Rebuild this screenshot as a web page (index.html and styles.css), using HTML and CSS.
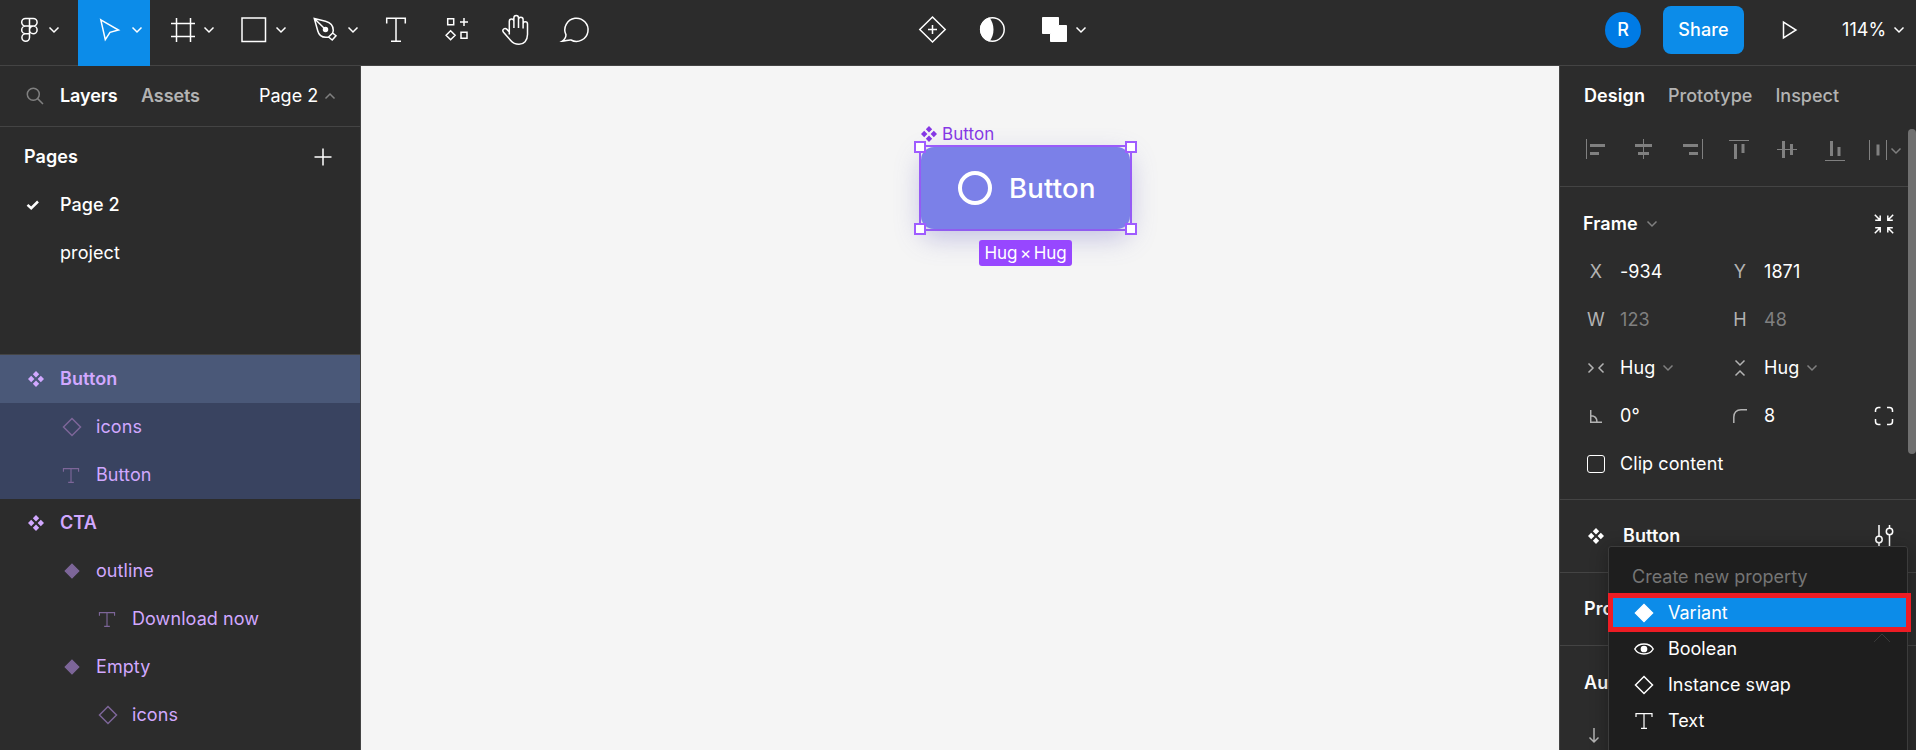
FILE: index.html
```html
<!DOCTYPE html>
<html lang="en">
<head>
<meta charset="utf-8">
<title>Design editor</title>
<link rel="stylesheet" href="styles.css">
</head>
<body>
<svg class="defs" width="0" height="0">
  <symbol id="chev" viewBox="0 0 12 8"><path d="M1.500 1.500 6 6l4.500-4.500"/></symbol>
  <symbol id="chev-up" viewBox="0 0 12 8"><path d="M1.500 6.500 6 2l4.500 4.500"/></symbol>
  <symbol id="component" viewBox="0 0 16 16"><path d="M8 0l3.200 3.200L8 6.400 4.800 3.200zM3.200 4.800 6.400 8l-3.200 3.200L0 8zM12.800 4.800 16 8l-3.200 3.200L9.600 8zM8 9.600l3.200 3.200L8 16l-3.200-3.200z"/></symbol>
  <symbol id="diamond" viewBox="0 0 20 20"><path d="M10 1.500 18.500 10 10 18.500 1.500 10z"/></symbol>
  <symbol id="tee" viewBox="0 0 18 18"><path d="M1 5V1.700h16V5M9 1.700v14.600M6 16.300h6"/></symbol>
</svg>
<div class="app">
  <header class="toolbar">
    <div class="tools">
      <svg class="tool menu" viewBox="0 0 78 65"><path d="M29.500 18.500h-4a3.800 3.800 0 0 0 0 7.600h4zM29.500 26.100h-4a3.800 3.800 0 0 0 0 7.600h4zM29.500 33.700h-4a3.800 3.800 0 1 0 4 3.800zM29.500 18.500h3.800a3.800 3.800 0 0 1 0 7.600h-3.800M33.400 26.100a3.800 3.800 0 1 1-3.900 3.800 3.800 3.800 0 0 1 3.900-3.800z"/><use href="#chev" x="48" y="26" width="12" height="8"/></svg>
      <svg class="tool active" viewBox="78 0 72 66"><path d="M100.800 19.800 118.500 30l-8.500 2.300-4.700 7.300z"/><use href="#chev" x="131" y="26" width="12" height="8"/></svg>
      <svg class="tool" viewBox="150 0 72 65"><path d="M176.500 18v24M190.500 18v24M171 23.500h24M171 36.500h24"/><use href="#chev" x="203" y="26" width="12" height="8"/></svg>
      <svg class="tool" viewBox="222 0 72 65"><path d="M242 18h23.500v23.500H242z"/><use href="#chev" x="275" y="26" width="12" height="8"/></svg>
      <svg class="tool" viewBox="294 0 72 65"><path d="M314.300 18.500l11.200 2.800c5 1.300 7.800 4.700 7.800 9.200l-.6 2.500 3.300 2.800-3.800 4.200-3.700-3c-5.500 1-9.300-.7-10.700-6zM314.300 18.500l10.200 10M332.700 33l-4.200 4"/><circle class="solid" cx="325.500" cy="29.500" r="2"/><use href="#chev" x="347" y="26" width="12" height="8"/></svg>
      <svg class="tool narrow" viewBox="366 0 60 65"><path d="M386.700 23.500v-5.300h18.600v5.300M396 18.200v23M391 41.200h10"/></svg>
      <svg class="tool narrow" viewBox="426 0 60 65"><path d="M447.700 18.700h6v6h-6zM461 32.300h6v6h-6zM464 18v8M460 22h8M450.600 30.700l4.500 4.500-4.500 4.500-4.500-4.500z"/></svg>
      <svg class="tool narrow" viewBox="486 0 60 65"><path d="M509.300 34.500V21.200a2.300 2.300 0 0 1 4.600 0V28M513.900 28V17.800a2.300 2.300 0 0 1 4.600 0V28M518.500 28v-8.500a2.300 2.300 0 0 1 4.600 0v9M523.100 28.500V24a2.200 2.200 0 0 1 4.400 0v10.500c0 6-3.700 9.800-8.500 9.800-4 0-6.200-1.200-8.300-3.800l-7.200-8.200c-2-2.800 1.300-5 3.500-2.900l2.300 2.500"/></svg>
      <svg class="tool narrow" viewBox="546 0 60 65"><path d="M562 41.300c2.400-1.500 3.900-3.400 4-6.500A11.600 11.600 0 1 1 571 40c-2.700-.5-5.500 1.300-9 1.300z"/></svg>
    </div>
    <svg class="object-tools" viewBox="902 0 200 65"><path d="M932.500 17l12.700 12.500-12.700 12.500L919.800 29.500zM932.500 25v9M928 29.500h9"/><circle cx="992.500" cy="29.500" r="11.700"/><path class="solid" d="M989 18.200a11.800 11.800 0 0 0 0 22.600c5-6.500 5-16 0-22.600z"/><path class="solid thin" d="M1042.500 17.500h16v8h8v16h-16v-8h-8z"/><use href="#chev" x="1075" y="26" width="12" height="8"/></svg>
    <div class="session">
      <span class="avatar">R</span>
      <button class="share">Share</button>
      <svg class="play" width="18" height="22" viewBox="0 0 18 22"><path d="M2.500 3v16L15 11z"/></svg>
      <span class="zoom-level">114%</span>
      <svg class="zoom-chev" width="12" height="8"><use href="#chev"/></svg>
    </div>
  </header>

  <aside class="left">
    <nav class="left-tabs">
      <svg class="search" width="18" height="18" viewBox="0 0 18 18"><circle cx="7.300" cy="7.300" r="6"/><path d="M11.600 11.600 17 17"/></svg>
      <b>Layers</b><b class="muted assets">Assets</b>
      <span class="current-page">Page 2</span>
      <svg class="dim" width="12" height="8"><use href="#chev-up"/></svg>
    </nav>
    <section class="pages">
      <div class="pages-head"><b>Pages</b><svg width="18" height="18" viewBox="0 0 18 18"><path d="M9 .5v17M.5 9h17"/></svg></div>
      <div class="page-row"><svg class="check" width="14" height="12" viewBox="0 0 14 12"><path d="M1.500 5.800 5.200 9.200 12 2.500"/></svg><span class="medium">Page 2</span></div>
      <div class="page-row"><span>project</span></div>
    </section>
    <ul class="layers">
      <li class="selected"><svg class="full"><use href="#component"/></svg><b>Button</b></li>
      <li class="child level1"><svg class="outline"><use href="#diamond"/></svg>icons</li>
      <li class="child level1"><svg class="tee"><use href="#tee"/></svg>Button</li>
      <li><svg class="full"><use href="#component"/></svg><b>CTA</b></li>
      <li class="level1"><svg class="filled"><use href="#diamond"/></svg>outline</li>
      <li class="level2"><svg class="tee"><use href="#tee"/></svg>Download now</li>
      <li class="level1"><svg class="filled"><use href="#diamond"/></svg>Empty</li>
      <li class="level2"><svg class="outline"><use href="#diamond"/></svg>icons</li>
    </ul>
  </aside>

  <main class="canvas">
    <div class="frame-label"><svg width="16" height="16"><use href="#component"/></svg>Button</div>
    <div class="frame">
      <div class="frame-fill"><i class="ring"></i><span>Button</span></div>
      <i class="handle tl"></i><i class="handle tr"></i><i class="handle bl"></i><i class="handle br"></i>
    </div>
    <div class="size-badge">Hug × Hug</div>
  </main>

  <aside class="right">
    <nav class="right-tabs"><b>Design</b><span>Prototype</span><span>Inspect</span></nav>
    <svg class="align" viewBox="1560 126 348 60">
      <path class="rule" d="M1586.500 139v20M1643.500 139v20M1702.500 139v20M1729 140.500h20M1777 149.500h20M1825 160.500h20M1869.500 140v20M1886.500 140v20"/>
      <path class="bars" d="M1590 144h15v3h-15zM1590 152h9v3h-9zM1635 144h17v3h-17zM1638 152h11v3h-11zM1683 144h15v3h-15zM1689 152h9v3h-9zM1734 144h3v15h-3zM1741.500 144h3v9h-3zM1782 141h3v17h-3zM1790 144h3v11h-3zM1830 141h3v15h-3zM1837.500 147h3v9h-3zM1876.500 144.500h3v11h-3z"/>
      <use href="#chev" x="1890" y="147" width="12" height="8"/>
    </svg>
    <section class="frame-props">
      <div class="frame-head"><b>Frame</b><svg class="dim" width="12" height="8"><use href="#chev"/></svg>
        <svg class="end-icon" viewBox="0 0 20 20"><path d="M.8.800l5.400 5.400M6.200 1.500v4.700H1.200M19.200.800l-5.400 5.400M13.800 1.500v4.700h5M.8 19.200l5.400-5.400M1.200 13.800h5v4.700M19.200 19.200l-5.400-5.400M18.800 13.800h-5v4.700"/></svg></div>
      <div class="prop-row"><label>X</label><span>-934</span><label>Y</label><span>1871</span></div>
      <div class="prop-row off"><label>W</label><span>123</span><label>H</label><span>48</span></div>
      <div class="prop-row"><label><svg width="18" height="12" viewBox="0 0 18 12"><path d="M1.500 1.500 6 6l-4.500 4.500M16.500 1.500 12 6l4.500 4.500"/></svg></label><span>Hug<svg class="dim" width="12" height="8"><use href="#chev"/></svg></span><label><svg width="12" height="18" viewBox="0 0 12 18"><path d="M1.500 1.500 6 6l4.500-4.500M1.500 16.500 6 12l4.500 4.500"/></svg></label><span>Hug<svg class="dim" width="12" height="8"><use href="#chev"/></svg></span></div>
      <div class="prop-row"><label><svg width="12" height="13" viewBox="0 0 12 13"><path d="M.7 0v12.200H12M.7 5.800c4 0 6.300 2.400 6.300 6.400"/></svg></label><span>0°</span><label><svg width="14" height="14" viewBox="0 0 14 14"><path d="M.8 14V8C.8 3.500 3.500.8 8 .8h6"/></svg></label><span>8</span>
        <svg class="corners" width="20" height="20" viewBox="0 0 20 20"><path d="M1.500 6V4.500a3 3 0 0 1 3-3H6.500M13 1.500h2.500a3 3 0 0 1 3 3V6M18.500 13v2.500a3 3 0 0 1-3 3H13M6.500 18.500H4.500a3 3 0 0 1-3-3V13"/></svg></div>
      <div class="clip-row"><i class="box"></i><span>Clip content</span></div>
    </section>
    <section class="panel-row component-row"><svg class="full" width="16" height="16"><use href="#component"/></svg><b>Button</b>
      <svg class="sliders" width="20" height="24" viewBox="0 0 20 24"><path d="M5 1v11.300M5 18.700V23M15.500 1v3.300M15.500 10.700V23"/><circle cx="5" cy="15.500" r="3.200"/><circle cx="15.500" cy="7.500" r="3.200"/></svg></section>
    <section class="panel-row"><b>Pro</b></section>
    <section class="panel-row last"><b>Au</b></section>
    <svg class="arrow-down" width="12" height="16" viewBox="0 0 12 16"><path d="M6 0v14M1.500 9.500 6 14l4.500-4.500"/></svg>
    <i class="scrollbar"></i>
    <div class="property-menu">
      <div class="menu-title">Create new property</div>
      <div class="menu-item hot"><svg class="variant"><use href="#diamond"/></svg>Variant</div>
      <div class="menu-item"><svg viewBox="0 0 20 20"><path d="M.8 10C4.500 3.300 15.500 3.300 19.200 10 15.500 16.700 4.500 16.700.8 10z"/><circle class="solid" cx="10" cy="10" r="2.600"/></svg>Boolean</div>
      <div class="menu-item"><svg><use href="#diamond"/></svg>Instance swap</div>
      <div class="menu-item"><svg class="menu-tee"><use href="#tee"/></svg>Text</div>
      <svg class="menu-chev" width="18" height="10" viewBox="0 0 18 10"><path d="M1 9l8-8 8 8"/></svg>
      <i class="highlight"></i>
    </div>
  </aside>
</div>
</body>
</html>
```

FILE: styles.css
```css
* { box-sizing: border-box; }
body {
  margin: 0;
  overflow: hidden;
  background: #2c2c2c;
  color: #fff;
  font: 400 18px/24px Inter, "Liberation Sans", sans-serif;
  letter-spacing: .08px;
}
b { font-weight: 600; }
svg { flex: none; fill: none; stroke: #fff; stroke-width: 1.500; }
.defs { position: absolute; }
.solid { fill: #fff; }
.thin { stroke-width: 1; }
.dim { stroke: #808080; }
.medium { font-weight: 500; }
.full { stroke: none; fill: #fff; }

.app {
  display: grid;
  grid-template: 66px 684px / 361px 1198px 357px;
  width: 1916px;
  height: 750px;
}

/* Toolbar */
.toolbar {
  grid-column: 1 / -1;
  display: flex;
  justify-content: space-between;
  border-bottom: 1px solid #444;
}
.tools { display: flex; width: 902px; }
.tool { width: 72px; height: 65px; }
.tool.menu { width: 78px; }
.tool.narrow { width: 60px; }
.tool.active { height: 66px; background: #0c8ce9; }
.object-tools { width: 200px; height: 65px; }
.session { display: flex; align-items: center; width: 814px; height: 60px; padding-left: 503px; font-weight: 500; }
.avatar { width: 36px; height: 36px; border-radius: 50%; background: #007be5; line-height: 36px; text-align: center; }
.share {
  width: 81px; height: 48px; margin-left: 22px; padding: 0;
  border: 0; border-radius: 8px; background: #0c8ce9; color: #fff;
  font: inherit; letter-spacing: inherit;
}
.play { margin-left: 37px; }
.zoom-level { width: 51px; margin-left: 43px; font-weight: 400; }

/* Left sidebar */
.left { border-right: 1px solid #444; }
.left-tabs { display: flex; align-items: center; height: 61px; padding-left: 26px; border-bottom: 1px solid #444; }
.left-tabs .search { margin-right: 16px; stroke: #808080; }
.left-tabs b { width: 81px; letter-spacing: -.1px; }
.left-tabs .assets { width: 118px; }
.muted { color: #b3b3b3; }
.current-page { width: 65px; letter-spacing: 0; }
.pages { height: 228px; padding-top: 5px; border-bottom: 1px solid #444; }
.pages-head { display: flex; justify-content: space-between; align-items: center; height: 49px; padding: 0 28px 0 24px; }
.page-row { display: flex; align-items: center; height: 48px; padding-left: 60px; }
.check { margin: 0 20px 0 -34px; stroke-width: 2.500; }
.layers { margin: 0; padding: 0; list-style: none; color: #d1a8ff; }
.layers li { display: flex; align-items: center; height: 48px; padding-left: 28px; }
.layers svg { width: 16px; height: 16px; margin-right: 16px; }
.layers .selected { background: #4a5878; }
.layers .child { background: #394360; }
.layers .level1 { padding-left: 62px; }
.layers .level2 { padding-left: 98px; }
.layers .full { fill: #d1a8ff; }
.layers svg.outline { width: 20px; height: 20px; margin-right: 14px; stroke: #7d6699; }
.layers svg.tee { width: 18px; height: 17px; margin-right: 16px; stroke: #7d6699; stroke-width: 1.200; }
.layers svg.filled { margin: 0 16px 0 2px; stroke: #7d6699; fill: #7d6699; }

/* Canvas: objects sit at free coordinates */
.canvas { position: relative; background: #f5f5f5; }
.frame-label {
  position: absolute; left: 560px; top: 56px;
  display: flex; align-items: center; gap: 5px; color: #8638e5;
  font-size: 17px;
}
.frame-label svg { fill: #8638e5; stroke: none; }
.frame {
  position: absolute; left: 558px; top: 79px; width: 213px; height: 86px;
  border: 2px solid #9f5cff;
}
.frame-fill {
  display: flex; align-items: center; height: 100%; padding-left: 37px;
  border-radius: 13px; background: #7b80e8;
  box-shadow: 0 9px 26px rgba(100, 95, 190, .34);
  font-size: 27.500px; font-weight: 500; letter-spacing: .2px;
}
.ring { width: 34px; height: 34px; margin-right: 17px; border: 4px solid #fff; border-radius: 50%; }
.handle { position: absolute; width: 12px; height: 12px; border: 2px solid #9f5cff; background: #fff; }
.tl { left: -7px; top: -6px; }
.tr { right: -7px; top: -6px; }
.bl { left: -7px; bottom: -6px; }
.br { right: -7px; bottom: -6px; }
.size-badge {
  position: absolute; left: 618px; top: 174px; width: 93px; height: 26px;
  border-radius: 3px; background: #9747ff; line-height: 26px; text-align: center; white-space: nowrap;
  font-size: 17px; letter-spacing: -.1px; word-spacing: -2px;
}

/* Right sidebar */
.right { position: relative; overflow: hidden; border-left: 1px solid #444; }
.right-tabs { display: flex; align-items: center; gap: 23px; height: 60px; padding-left: 24px; }
.right-tabs span { color: #b3b3b3; font-weight: 500; letter-spacing: 0; }
.align { display: block; width: 348px; height: 60px; stroke: #808080; }
.rule { stroke-width: 1; }
.bars { fill: #808080; stroke: none; }
.frame-props { height: 314px; padding-top: 12px; border: solid #444; border-width: 1px 0; }
.frame-head { display: flex; align-items: center; height: 49px; padding: 0 22px 0 23px; }
.frame-head .dim { margin-left: 8px; }
.end-icon { width: 20px; height: 20px; margin-left: auto; }
.prop-row { display: grid; grid-template-columns: 60px 84px 60px 96px 48px; align-items: center; height: 48px; }
.prop-row label { display: flex; justify-content: center; padding-left: 12px; color: #b3b3b3; }
.prop-row label svg { stroke: #b3b3b3; }
.prop-row span { display: flex; align-items: center; gap: 7px; }
.prop-row.off span { color: #808080; }
.corners { margin-left: 14px; }
.clip-row { display: flex; align-items: center; height: 48px; padding-left: 27px; }
.box { width: 18px; height: 18px; margin-right: 15px; border: 1px solid #fff; border-radius: 3px; }
.panel-row { display: flex; align-items: center; height: 73px; padding-left: 24px; border-bottom: 1px solid #444; }
.component-row .full { margin: 0 19px 0 4px; }
.sliders { margin-left: auto; margin-right: 22px; }
.panel-row.last { border-bottom: 0; }
.arrow-down { display: block; margin: 9px 0 0 28px; stroke: #b3b3b3; }
.scrollbar { position: absolute; right: 0; top: 63px; width: 8px; height: 325px; border-radius: 4px; background: #707070; }

/* Property menu */
.property-menu {
  position: absolute; left: 48px; top: 480px; width: 300px; height: 240px;
  padding-top: 12px; border: 1px solid #3c3c3c; border-radius: 3px;
  background: #1e1e1e; box-shadow: 0 3px 18px rgba(0, 0, 0, .3);
}
.menu-title { height: 36px; padding-left: 23px; color: #757575; line-height: 36px; letter-spacing: 0; }
.menu-item { display: flex; align-items: center; height: 36px; padding-left: 25px; letter-spacing: 0; }
.menu-item svg { width: 20px; height: 20px; margin-right: 14px; }
.menu-item.hot { background: #0c8ce9; }
.variant { fill: #fff; }
.menu-item .menu-tee { width: 18px; height: 18px; margin: 0 15px 0 1px; stroke-width: 1.200; }
.menu-chev { position: absolute; right: 16px; top: 86px; stroke: #383838; stroke-width: 1; }
.highlight { position: absolute; left: -1px; top: 46px; width: 303px; height: 39px; border: 5px solid #ed1c24; }
```
